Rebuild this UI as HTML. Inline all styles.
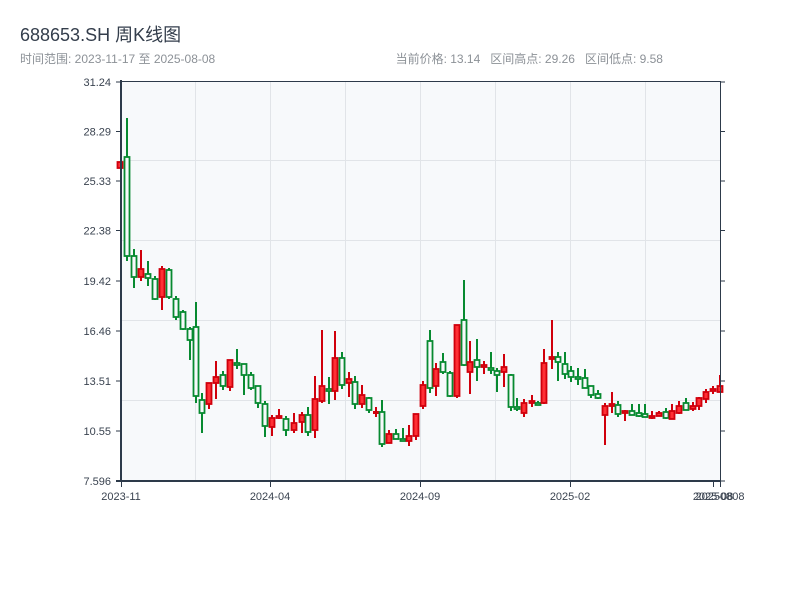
<!DOCTYPE html>
<html><head><meta charset="utf-8"><style>
body{margin:0;background:#fff;width:800px;height:600px;overflow:hidden;font-family:"Liberation Sans","Noto Sans CJK SC",sans-serif}
svg text{font-family:"Liberation Sans","Noto Sans CJK SC",sans-serif;white-space:pre}
</style></head><body>
<svg width="800" height="600" xmlns="http://www.w3.org/2000/svg" id="s">
<text x="20" y="41" font-size="18" fill="#333d4b">688653.SH 周K线图</text>
<text x="20" y="63" font-size="12" fill="#8c9197">时间范围: 2023-11-17 至 2025-08-08</text>
<text x="663" y="63" font-size="12" fill="#8c9197" text-anchor="end">当前价格: 13.14   区间高点: 29.26   区间低点: 9.58</text>
<rect x="121" y="81" width="599" height="400" fill="#f7f9fb"/>
<g stroke="#e1e4e8" stroke-width="1">
<line x1="195.5" y1="81" x2="195.5" y2="481"/><line x1="270.5" y1="81" x2="270.5" y2="481"/><line x1="345.5" y1="81" x2="345.5" y2="481"/><line x1="420.5" y1="81" x2="420.5" y2="481"/><line x1="495.5" y1="81" x2="495.5" y2="481"/><line x1="570.5" y1="81" x2="570.5" y2="481"/><line x1="645.5" y1="81" x2="645.5" y2="481"/>
<line x1="121" y1="160.5" x2="720" y2="160.5"/><line x1="121" y1="240.5" x2="720" y2="240.5"/><line x1="121" y1="320.5" x2="720" y2="320.5"/><line x1="121" y1="400.5" x2="720" y2="400.5"/>
</g>
<g id="c"></g>
<g stroke="#2d3a4a" fill="none">
<line x1="121" y1="81.5" x2="720" y2="81.5" stroke-width="1"/>
<line x1="720.5" y1="81" x2="720.5" y2="481" stroke-width="1"/>
<line x1="121" y1="80" x2="121" y2="482" stroke-width="2"/>
<line x1="116" y1="481" x2="720" y2="481" stroke-width="2"/>
</g>
<g id="t" stroke="#2d3a4a" stroke-width="1"></g>
<g font-size="11" fill="#3a4350" text-anchor="end" id="yl"></g>
<g font-size="11" fill="#3a4350" text-anchor="middle">
<text x="121" y="500">2023-11</text><text x="270" y="500">2024-04</text><text x="420" y="500">2024-09</text><text x="570" y="500">2025-02</text><text x="713" y="500">2025-08</text><text x="720" y="500">20250808</text>
</g>
</svg>
<script>
var d=[[120,162,168,162,168,'r'],[127,157,256,118,261,'g'],[134,256,277,249,288,'g'],[141,269,277,250,281,'r'],[148,274,278,261,286,'g'],[155,279,299,276,300,'g'],[162,269,297,266,310,'r'],[169,270,297,268,299,'g'],[176,299,317,296,320,'g'],[183,312,329,310,330,'g'],[190,329,340,327,360,'g'],[196,327,396,302,403,'g'],[202,400,413,393,433,'g'],[209,383,404,383,409,'r'],[216,377,383,361,399,'r'],[223,375,386,371,390,'g'],[230,360,387,360,391,'r'],[237,363,365,349,369,'g'],[244,364,375,364,395,'g'],[251,375,388,372,390,'g'],[258,386,403,386,408,'g'],[265,404,426,401,437,'g'],[272,418,427,415,436,'r'],[279,416,418,409,419,'r'],[286,419,430,416,436,'g'],[294,423,430,413,433,'r'],[302,415,422,412,433,'r'],
[308,415,432,407,436,'g'],[315,399,430,376,438,'r'],[322,386,401,330,403,'r'],[329,389,391,377,404,'g'],[335,358,391,331,400,'r'],[342,358,385,352,389,'g'],[349,379,383,372,397,'r'],[355,382,404,376,409,'g'],[362,395,404,385,408,'r'],[369,398,410,397,413,'g'],[376,412,413,407,417,'r'],[382,412,444,400,447,'g'],[389,434,443,430,443,'r'],[396,434,439,429,439,'g'],[403,439,441,428,441,'g'],[409,436,441,425,446,'r'],[416,414,436,414,440,'r'],[423,385,406,381,409,'r'],[430,341,388,330,393,'g'],[436,369,386,363,396,'r'],[443,362,372,353,374,'g'],[450,373,396,371,397,'g'],[457,325,396,325,398,'r'],[464,320,365,280,366,'g'],[470,362,372,341,394,'r'],[477,360,367,339,381,'g'],[484,365,367,361,374,'r'],[491,368,370,352,374,'g'],[497,371,375,368,392,'g'],[504,367,372,354,387,'r'],[511,375,407,374,411,'g'],[517,407,409,398,411,'g'],
[524,403,413,399,417,'r'],[532,401,403,395,407,'r'],[538,403,405,401,405,'g'],[544,363,403,349,404,'r'],[552,357,359,320,369,'r'],[558,357,362,352,381,'g'],[565,364,374,352,379,'g'],[571,371,377,366,382,'g'],[578,377,379,368,385,'g'],[585,378,388,369,388,'g'],[591,386,395,386,398,'g'],[598,394,398,390,399,'g'],[605,406,415,403,445,'r'],[612,404,406,392,413,'r'],[618,405,414,401,417,'g'],[625,411,413,410,421,'r'],
[632,411,415,404,415,'g'],[639,413,416,404,417,'g'],[645,414,417,404,417,'g'],[652,416,418,411,419,'r'],[659,413,416,411,416,'r'],[666,412,418,408,419,'g'],[672,411,419,404,419,'r'],[679,406,413,401,414,'r'],[686,403,410,398,410,'g'],[693,406,409,402,411,'r'],[699,398,406,397,410,'r'],[706,392,399,389,403,'r'],[713,389,391,386,394,'r'],[720,386,392,375,392,'r']];
var g=document.getElementById('c'),h='';
d.forEach(function(c){var x=c[0],r=c[5]=='r',s=r?'#d0000c':'#078a30',f=r?'#ff3036':'#f7f9fb';
h+='<line x1="'+x+'" y1="'+c[3]+'" x2="'+x+'" y2="'+c[4]+'" stroke="'+s+'" stroke-width="2"/>';
var t=c[1],b=c[2];if(b-t<2){h+='<rect x="'+(x-3)+'" y="'+(t-1)+'" width="6" height="3" fill="'+s+'"/>';}
else h+='<rect x="'+(x-2.5)+'" y="'+t+'" width="5" height="'+(b-t)+'" fill="'+f+'" stroke="'+s+'" stroke-width="1.8"/>';});
g.innerHTML=h;
var ys=[[82,'31.24'],[131.5,'28.29'],[181,'25.33'],[230.5,'22.38'],[281,'19.42'],[331,'16.46'],[381,'13.51'],[431,'10.55'],[481,'7.596']],yl='',tk='';
ys.forEach(function(a){yl+='<text x="111" y="'+(a[0]+4)+'">'+a[1]+'</text>';tk+='<line x1="116" y1="'+a[0]+'" x2="121" y2="'+a[0]+'"/><line x1="720" y1="'+a[0]+'" x2="725" y2="'+a[0]+'"/>';});
[121,270,420,570,713,720].forEach(function(x){tk+='<line x1="'+(x+.5)+'" y1="481" x2="'+(x+.5)+'" y2="487"/>';});
document.getElementById('yl').innerHTML=yl;document.getElementById('t').innerHTML=tk;
</script>
</body></html>
